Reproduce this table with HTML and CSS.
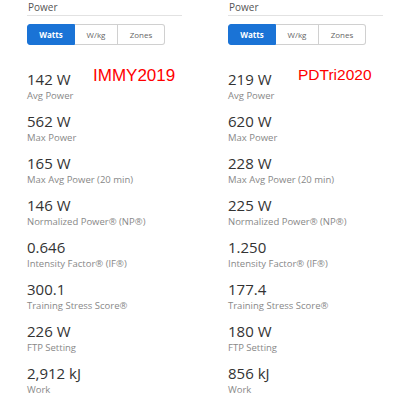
FILE: index.html
```html
<!DOCTYPE html>
<html>
<head>
<meta charset="utf-8">
<link rel="stylesheet" href="styles.css">
</head>
<body>
<div class="page">
  <section class="col">
    <div class="title">Power</div>
    <div class="tabs">
      <span class="tab tab-watts active">Watts</span>
      <span class="tab tab-wkg">W/kg</span>
      <span class="tab tab-zones">Zones</span>
    </div>
    <div class="stats">
      <div class="stat"><div class="value">142 W</div><div class="label">Avg Power</div></div>
      <div class="stat"><div class="value">562 W</div><div class="label">Max Power</div></div>
      <div class="stat"><div class="value">165 W</div><div class="label">Max Avg Power (20 min)</div></div>
      <div class="stat"><div class="value">146 W</div><div class="label">Normalized Power® (NP®)</div></div>
      <div class="stat"><div class="value">0.646</div><div class="label">Intensity Factor® (IF®)</div></div>
      <div class="stat"><div class="value">300.1</div><div class="label">Training Stress Score®</div></div>
      <div class="stat"><div class="value">226 W</div><div class="label">FTP Setting</div></div>
      <div class="stat"><div class="value">2,912 kJ</div><div class="label">Work</div></div>
    </div>
    <div class="note note-left">IMMY2019</div>
  </section>
  <section class="col">
    <div class="title">Power</div>
    <div class="tabs">
      <span class="tab tab-watts active">Watts</span>
      <span class="tab tab-wkg">W/kg</span>
      <span class="tab tab-zones">Zones</span>
    </div>
    <div class="stats">
      <div class="stat"><div class="value">219 W</div><div class="label">Avg Power</div></div>
      <div class="stat"><div class="value">620 W</div><div class="label">Max Power</div></div>
      <div class="stat"><div class="value">228 W</div><div class="label">Max Avg Power (20 min)</div></div>
      <div class="stat"><div class="value">225 W</div><div class="label">Normalized Power® (NP®)</div></div>
      <div class="stat"><div class="value">1.250</div><div class="label">Intensity Factor® (IF®)</div></div>
      <div class="stat"><div class="value">177.4</div><div class="label">Training Stress Score®</div></div>
      <div class="stat"><div class="value">180 W</div><div class="label">FTP Setting</div></div>
      <div class="stat"><div class="value">856 kJ</div><div class="label">Work</div></div>
    </div>
    <div class="note note-right">PDTri2020</div>
  </section>
</div>
</body>
</html>
```
FILE: styles.css
```css
html, body {
  margin: 0;
  padding: 0;
  background: #fff;
}
body {
  font-family: "Open Sans", "DejaVu Sans", sans-serif;
  width: 400px;
  height: 400px;
  overflow: hidden;
}
.page {
  display: flex;
}
.col {
  position: relative;
  width: 201px;
  padding-left: 27px;
  box-sizing: border-box;
}
.col + .col {
  width: 199px;
}
.title {
  width: 155px;
  font-size: 10px;
  line-height: 14px;
  color: #555;
  padding-bottom: 1px;
  border-bottom: 1px solid #e2e2e2;
  padding-left: 1px;
  box-sizing: border-box;
}
.tabs {
  display: flex;
  margin-top: 8px;
  height: 21px;
}
.tab {
  display: flex;
  align-items: center;
  justify-content: center;
  font-size: 8px;
  color: #666;
  border: 1px solid #d0d0d0;
  border-left: none;
  box-sizing: border-box;
  background: #fff;
}
.tab-watts {
  width: 48px;
  border-left: 1px solid #1a73d6;
  border-radius: 3px 0 0 3px;
}
.tab-wkg {
  width: 43px;
}
.tab-zones {
  width: 47px;
  border-radius: 0 3px 3px 0;
}
.tab.active {
  background: #1a73d6;
  border-color: #1a73d6;
  color: #fff;
  font-weight: 700;
}
.stats {
  display: flex;
  flex-direction: column;
  gap: 9px;
  margin-top: 24px;
}
.value {
  font-size: 15px;
  line-height: 20px;
  color: #333;
}
.label {
  font-size: 9.5px;
  line-height: 13px;
  color: #888;
}
.note {
  position: absolute;
  top: 66px;
  font-family: "Liberation Sans", Arial, sans-serif;
  color: #f00;
  white-space: nowrap;
}
.note-left {
  left: 93px;
  font-size: 17px;
}
.note-right {
  left: 97px;
  font-size: 15.5px;
}
```
